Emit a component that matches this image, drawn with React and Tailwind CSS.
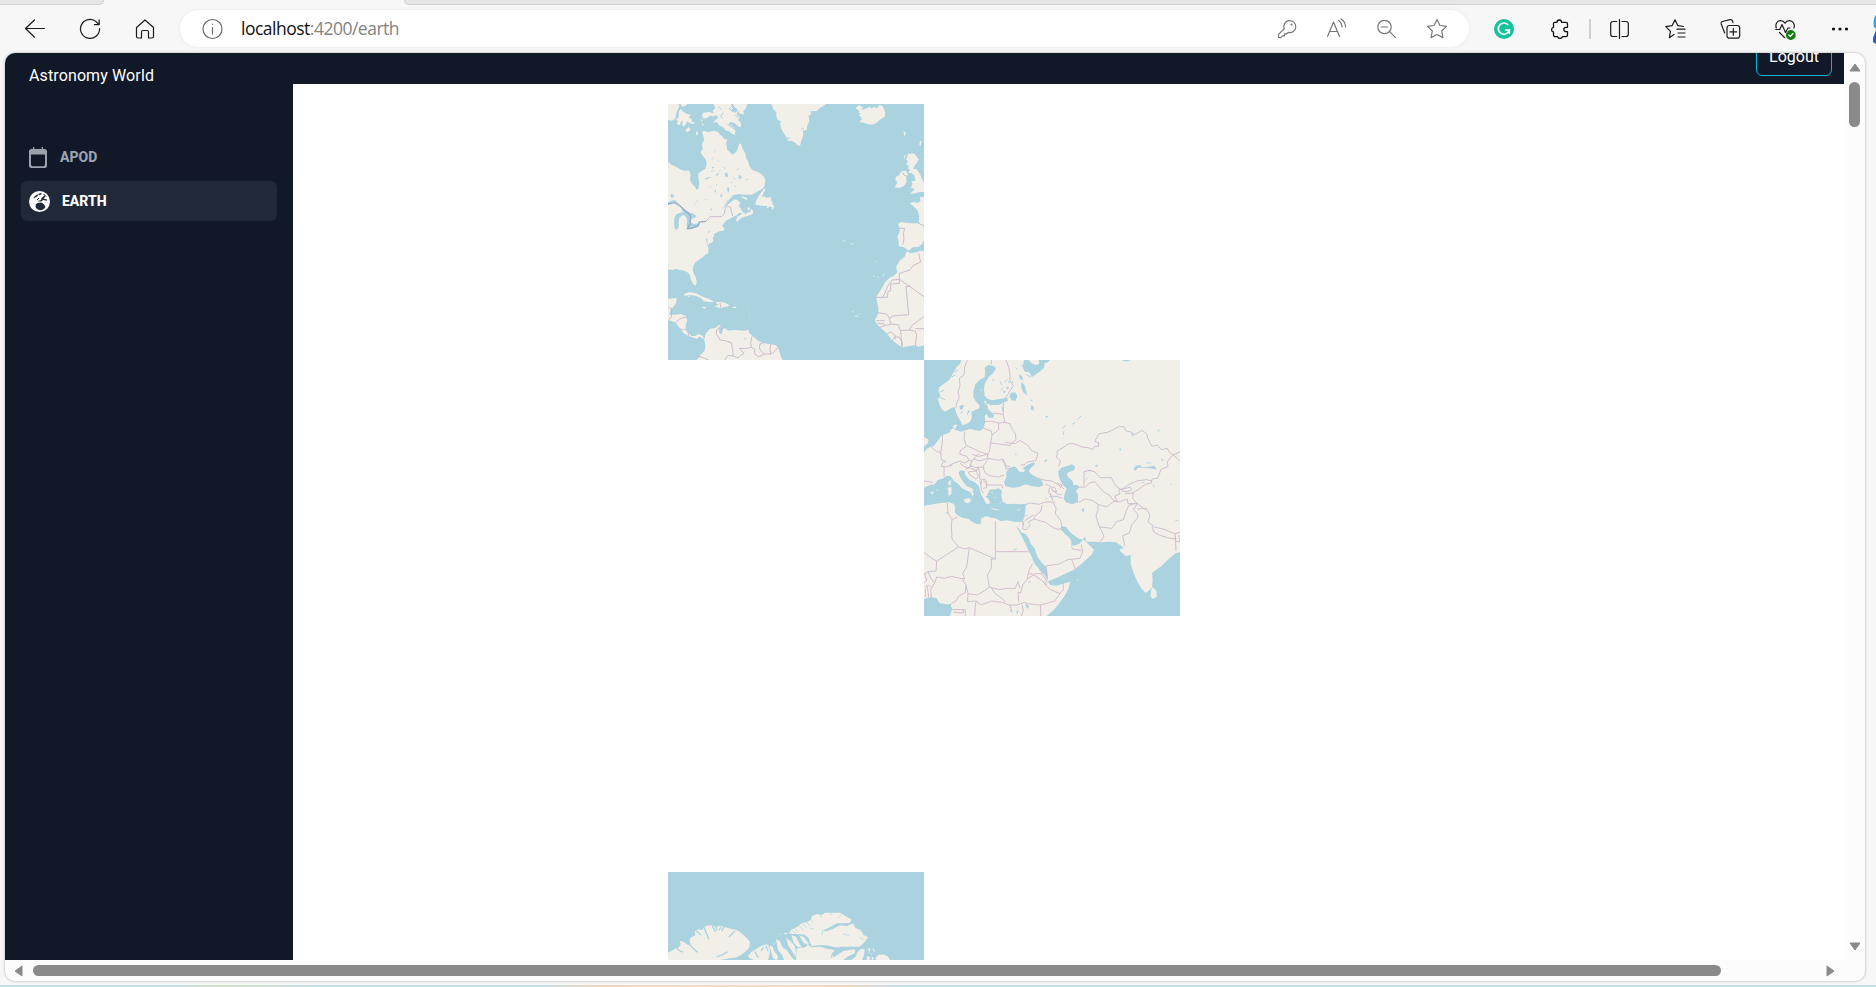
import React from 'react';

const WATER = '#aad3df';
const LAND = '#f2efe9';
const BORDER = '#c9b3c6';

function Icon({ children, className = 'size-6', stroke = '#1b1b1b', width = 1.2 }) {
  return (
    <svg viewBox="0 0 24 24" className={`shrink-0 ${className}`} fill="none" stroke={stroke} strokeWidth={width} strokeLinecap="round" strokeLinejoin="round">
      {children}
    </svg>
  );
}

function AtlanticTile() {
  return (
    <svg viewBox="12 12 768 768" className="block size-64" preserveAspectRatio="none">
      <rect x="12" y="12" width="768" height="768" fill={WATER} />
      <g fill={LAND}>
        <path d="M12 12H44L46 20 40 30 36 44 34 56 24 62 12 60Z" />
        <path d="M44 36 50 26 58 36 70 42 82 44 74 52 84 58 82 64 92 68 90 72 78 70 70 64 66 72 60 80 54 74 56 62 50 66 48 76 38 72 42 62 36 60 44 52Z" />
        <path d="M50 12H70L62 20 52 18ZM64 90 74 82 80 86 76 94 68 96ZM96 94 102 96 102 104 97 106ZM108 58 116 60 114 66ZM112 70 120 73 116 78Z" />
        <path d="M148 12H200L206 22 202 34 214 38 222 30 218 44 228 52 222 60 232 70 230 82 224 80 212 70 200 66 194 72 208 82 216 92 212 100 216 104 204 102 196 94 186 92 178 82 166 76 158 66 146 68 154 60 164 52 156 46 146 50 140 46 130 54 118 56 114 46 118 38 134 36 150 40 146 32 154 24Z" />
        <path d="M208 12H250L246 24 238 34 240 44 226 40 220 28 212 22Z" />
        <path d="M322 12H486L474 20 464 26 460 32 448 34 438 34 442 42 434 48 436 64 430 76 428 90 416 92 418 104 412 122 408 138 400 136 394 128 382 122 374 124 364 108 356 94 350 82 348 64 340 58 336 44 338 38 328 28Z" />
        <path d="M574 24 586 16 596 22 592 30 600 28 610 24 618 20 622 26 632 20 638 26 646 14 656 18 660 28 664 36 662 50 650 58 638 68 624 74 610 72 600 68 586 66 594 58 590 50 584 46 590 40 580 36 588 34Z" />
        <path d="M114 96 120 92 130 96 144 94 152 92 162 96 168 104 178 112 180 118 190 118 186 130 190 150 198 156 204 164 214 158 220 150 224 134 230 130 236 146 244 160 246 174 252 184 256 198 262 206 270 212 282 216 292 222 300 232 304 240 302 256 296 266 284 272 274 278 264 284 240 284 224 282 210 284 196 298 184 314 174 328 184 320 198 308 212 298 220 300 230 308 224 316 230 326 234 334 244 342 250 338 258 336 262 326 268 334 266 342 250 348 236 352 224 360 220 366 216 360 220 350 228 346 236 340 226 338 218 346 208 350 198 356 186 362 180 370 174 378 182 386 178 392 166 394 154 400 150 402 150 408 146 414 148 424 140 430 136 430 134 436 128 428 130 420 128 414 126 420 130 434 134 446 132 460 124 464 116 472 104 480 94 488 88 498 86 510 90 522 96 534 98 548 94 558 86 550 80 538 78 526 72 518 64 514 52 510 44 510 36 506 26 510 12 508V312L20 308 32 306 46 314 56 324 52 330 60 334 50 338 38 342 32 352 30 370 32 386 38 390 44 382 44 366 46 354 54 346 60 346 66 350 70 360 68 372 70 388 82 386 100 378 104 370 88 372 80 366 82 356 92 354 98 348 86 340 76 338 66 332 56 324 46 312 32 300 12 306V186L22 194 36 200 48 208 60 212 76 212 80 224 78 240 84 252 94 262 98 270 104 264 106 252 104 238 102 222 114 212 124 206 128 192 126 180 114 164 110 156 116 148 114 132 120 120 118 108Z" />
        <path d="M302 264 296 272 288 282 282 292 276 302 274 314 284 316 300 318 310 318 308 326 316 320 324 320 322 328 328 328 330 318 324 310 328 306 322 304 320 292 306 294 302 288 294 292 298 280 304 270ZM230 288 250 294 248 300 236 294ZM250 326 254 320 258 326 254 332Z" />
        <path d="M732 162 744 160 752 162 764 178 758 190 752 196 748 206 758 208 768 222 774 238 780 248V276L768 276 752 280 736 282 748 272 752 266 740 264 746 252 742 244 754 242 752 228 744 220 734 218 738 208 732 208 734 196 726 194 732 184 726 180Z" />
        <path d="M712 214 724 212 730 218 732 224 726 232 728 246 720 258 706 264 692 262 696 256 700 246 694 240 696 230 706 226ZM720 168 726 164 722 178ZM718 94 726 98 722 110ZM768 122 772 124 770 138 766 134Z" />
        <path d="M780 290V378L768 372 764 362 766 348 760 330 750 320 738 310 748 306 762 308 770 302 768 292Z" />
        <path d="M702 372 712 366 740 370 764 370 780 378V420L774 432 764 440 746 442 734 452 720 442 704 438 704 424 700 410 706 396 708 386Z" />
        <path d="M728 454 740 460 760 456 768 452 780 454V736L764 740 754 736 736 738 716 742 702 734 684 720 672 706 662 694 650 684 638 672 632 660 640 648 644 630 640 608 636 592 646 576 656 560 664 546 676 534 692 526 700 516 696 502 706 484 722 470Z" />
        <path d="M60 582 76 576 96 580 112 588 126 594 142 600 150 606 136 606 120 604 110 594 96 588 76 584 62 588ZM154 606 170 606 184 608 196 616 190 620 178 622 166 624 150 618 164 616ZM112 620 128 622 122 626ZM206 620 218 620 216 624 206 624ZM70 586 78 588 74 592Z" />
        <path d="M12 596 38 594 36 610 28 620 20 630 16 644 30 644 50 642 66 648 70 660 66 672 64 690 74 700 82 708 94 708 104 702 118 708 120 716 106 710 98 716 86 712 72 708 58 698 50 688 42 678 34 668 20 662 12 660Z" />
        <path d="M120 714 126 700 138 686 154 684 166 674 172 678 164 686 166 698 174 702 176 688 182 684 192 692 214 690 240 692 256 690 254 696 262 704 270 712 284 724 298 730 318 732 336 736 344 748 350 768 356 780H98L110 764 122 752 124 736Z" />
        <path d="M534 420 546 424 540 424ZM558 430 568 431 562 433ZM632 484 638 486ZM628 526 634 530 626 529ZM640 530 646 532 642 534ZM656 526 662 520 658 530ZM564 632 570 636 564 636ZM576 646 584 650 572 650ZM582 640 588 642Z" stroke={LAND} strokeWidth="1.4" opacity="0.6" />
      </g>
      <g fill={WATER}>
        <path d="M20 282 30 284 28 294 20 292ZM144 200 152 202 144 206ZM156 224 164 216 160 230ZM182 220 190 218 192 230 184 230ZM120 238 130 232 144 232 128 238ZM224 224 236 232 224 238ZM168 290 172 280 176 290ZM190 262 196 264 194 278 190 272ZM244 238 256 236 248 240ZM150 276 156 266 154 278ZM96 302 104 302 98 306ZM138 328 144 324 142 332ZM194 126 200 124 200 132ZM158 250 160 258 156 254ZM168 692 174 692 172 702 166 700ZM242 712 246 716 242 720ZM24 636 28 640 22 642Z" />
      </g>
      <g fill="none" stroke={WATER} strokeWidth="2">
        <path d="M144 178 148 172M140 214 152 212M160 180 166 184M178 202 186 206M136 262 142 258M208 234 214 238M184 308 192 300M110 180 104 190M126 414 130 430M200 248 206 246M170 208 166 214M150 158 154 152M218 210 224 206M94 316 90 310M122 300 128 298M210 258 216 260" />
        <path d="M204 18 196 26 206 34M178 38 170 50 176 56M190 72 206 84 218 94M214 44 222 54M340 62 352 66M420 84 412 90M368 112 378 116M132 398 138 394M164 20 172 28" strokeWidth="3" />
      </g>
      <g fill="none" stroke={LAND} strokeWidth="1.2" opacity="0.75">
        <path d="M116 544 122 550M112 560 120 566M136 562 140 572M146 576 152 582M160 590 168 594M246 624 254 632 258 646 260 660 254 674M268 666 270 670M240 688 250 688M514 410 516 414" strokeDasharray="4 3" />
      </g>
      <g fill="none" stroke={BORDER} strokeWidth="2.6">
        <path d="M12 312 32 308 48 318 64 332 76 342 80 352 78 372 70 386 80 386 102 378 106 366 126 364" stroke="#94abc6" strokeWidth="4" />
        <path d="M126 364 138 350 172 350 180 342 184 326 190 318 200 322 202 334 206 348M12 624 22 624 22 652 14 658M34 668 46 658 60 652 70 652M48 686 58 690 62 686M72 698 74 708M118 706 122 714M168 608 170 622" />
        <path d="M172 676 158 690 156 702 164 712 168 720 184 722 202 728 206 752 208 768 192 766 182 780M206 768 222 774 230 766 240 760 226 744 244 746 262 742 260 728 264 710M262 742 272 748 272 762 284 770 294 766 302 762 292 754 286 744 288 732 298 728M302 762 320 762 318 748 320 732M320 762 330 756 340 744M98 768 114 772 134 780" />
        <path d="M716 216 720 226 728 228M706 384 722 386 718 400 720 416 716 434M764 370 780 378M764 460 770 486 748 496 738 510 706 520 706 538 684 540 670 560 664 576 656 592M636 592H670L672 574 680 572 680 552 706 550 706 538 738 560 780 590M738 558 726 560 734 644 684 648 678 656 668 642 640 638M676 656 680 672 702 674 710 692 736 690 744 676 780 650M636 662H662M640 670 662 672M644 684 664 676 680 674M668 702 680 696 692 704 694 718M684 722 694 710 706 712 714 726 714 740M710 692 712 718 714 740M736 690 754 694 758 704 754 738M754 686H780" />
      </g>
    </svg>
  );
}

function EurasiaTile() {
  return (
    <svg viewBox="12 15 768 768" className="block size-64" preserveAspectRatio="none">
      <rect x="12" y="15" width="768" height="768" fill={LAND} />
      <g fill={WATER}>
        <path d="M12 15H124L120 26 110 36 98 56 88 74 72 86 56 98 56 112 62 122 54 132 58 148 66 164 76 170 92 160 104 156 108 172 112 182 122 198 126 210 138 208 150 200 156 186 154 170 164 166 178 160 178 150 168 140 160 126 160 110 166 88 180 74 194 66 196 50 194 38 204 30 220 32 228 40 220 54 206 66 194 86 192 104 194 122 204 132 216 136 238 132 262 128 264 138 252 142 236 150 218 150 206 150 202 160 212 170 222 176 220 188 206 188 200 176 194 184 196 202 190 220 180 228 168 226 150 222 136 226 124 230 108 226 98 220 92 226 86 220 82 206 82 192 90 180 104 182 100 196 92 206 86 216 92 230 80 236 66 240 60 248 50 262 42 272 30 276 20 282 12 294V274L24 264 26 254 12 246Z" />
        <path d="M312 15H326L336 26 348 30 358 26 356 15H390L384 22 374 24 372 38 362 48 348 58 336 66 328 52 314 50 308 36ZM604 15H632L620 20ZM272 114 286 112 292 124 286 138 276 136 268 126ZM304 80 314 90 318 108 322 122 310 112 304 98ZM296 58 306 64 310 76 300 72ZM334 150 342 156 340 168 332 162ZM118 152 132 150 128 162 120 164ZM144 166 150 168 140 182ZM258 94 264 96 262 106ZM250 106 258 110 250 116Z" />
        <path d="M12 398 30 390 44 388 52 376 70 370 80 362 92 364 102 378 114 386 126 400 138 406 152 412 158 424 152 434 146 430 134 432 140 444 150 442 156 428 162 416 154 406 162 410 156 400 140 394 130 382 120 366 116 352 122 346 134 348 136 360 148 374 164 382 176 392 180 406 184 420 190 430 198 446 210 446 208 434 196 424 212 420 208 404 222 404 236 400 246 408 244 422 248 440 262 448 282 446 298 448 318 446 316 464 314 480 310 496 302 502 282 500 262 496 242 498 226 490 214 488 198 484 184 490 182 508 168 506 156 500 146 492 126 488 112 480 104 472 106 456 100 446 88 442 62 444 38 448 12 452Z" />
        <path d="M252 380 260 366 258 352 270 338 284 334 292 342 298 350 310 352 316 346 308 340 322 330 340 322 346 326 334 338 326 348 334 358 350 366 366 378 370 390 358 396 336 394 316 388 298 396 278 398 256 394Z" />
        <path d="M414 350 424 338 440 334 456 328 466 336 462 346 446 352 440 358 446 368 458 378 460 390 474 390 476 400 468 408 474 420 474 442 456 448 438 442 430 430 436 412 440 400 428 390 420 374 416 362Z" />
        <path d="M288 514 296 520 306 534 316 536 326 550 332 566 344 580 348 594 354 608 366 624 378 636 382 650 382 676 390 690 410 692 450 680 446 700 434 722 420 742 402 764 380 783H780V592L768 594 756 604 740 618 724 634 706 646 696 654 698 676 696 696 688 706 676 714 664 700 652 680 642 656 632 628 632 600 618 604 602 590 598 584 612 578 588 562 570 560 540 562 520 560 500 560 494 544 488 556 478 566 462 572 454 570 454 558 446 546 436 538 424 526 424 514 438 516 450 532 464 542 478 552 494 556 510 572 522 584 516 598 494 618 480 630 462 644 440 654 416 666 392 676 384 678 374 660 362 650 354 638 342 624 336 606 328 592 318 570 308 550 300 534Z" />
        <path d="M12 732 32 726 50 730 58 744 76 748 92 748 96 762 90 783H12Z" />
        <path d="M640 342 648 332 664 330 662 336 682 336 704 332 710 344 690 340 670 338 654 338 646 348ZM722 308 732 318 726 318ZM634 232 640 238 636 246ZM714 226 720 222 714 232ZM598 280 604 282 600 288ZM506 344 514 346 506 350ZM524 332 534 328 530 336ZM484 462 494 460 490 474 486 466ZM372 318 382 312 378 322ZM376 182 384 184 380 190ZM664 380 676 382 668 384ZM752 386 758 388 752 390ZM284 296 294 300 286 300ZM316 744 326 752 324 762 318 756ZM290 766 296 768 290 780ZM326 678 334 680 326 684Z" />
        <path d="M210 404 234 402 242 412 238 430 246 446 236 456 220 450 208 436 202 418Z" />
        <path d="M428 220 438 210M430 240 432 228M456 208 466 202M472 194 484 182M700 388 702 396M270 764 276 772M680 324 694 324M496 374 504 368M766 496 774 496M280 586 292 580M78 472 84 476M388 424 398 428M376 428 382 430" fill="none" stroke={WATER} strokeWidth="2.500" />
        <path d="M242 106 250 98M214 58 220 46M254 82 262 74M268 84 266 78M128 168 122 176M318 58 332 66M330 134 338 138M304 28 310 36M286 38 292 42M218 78 222 72M240 80 246 90M246 156 248 168M262 102 266 96M276 84 278 78M332 50 336 58M58 112 72 106M60 128 76 134M94 66 106 60M104 52 114 44" fill="none" stroke={WATER} strokeWidth="3" />
      </g>
      <g fill={LAND}>
        <path d="M86 380 92 376 92 390 86 390ZM84 398 94 396 94 416 86 422ZM132 434 148 430 144 444 134 440ZM32 410 42 412 36 418ZM48 404 54 406ZM212 460 238 464 224 464ZM290 464 300 460 298 468ZM238 446 244 442ZM98 214 110 208 106 222ZM132 190 138 196 130 198ZM696 696 708 706 710 724 700 732 692 724 694 706ZM470 674 476 676ZM180 104 186 106ZM200 146 210 148 204 156ZM212 412 220 414ZM222 426 228 430ZM192 138 200 140 196 146Z" stroke={LAND} strokeWidth="1" />
      </g>
      <g fill="none" stroke={BORDER} strokeWidth="2.400">
        <path d="M142 15 134 36 132 60 118 70 120 92 114 110 118 128 110 144 108 158M214 15V28M258 15 266 36 270 60 270 78 280 92 270 108 256 130M250 142V178L254 202 270 206 274 218 286 236 288 254 278 262 270 272 246 268 212 264M222 174 250 178M194 200 212 198 236 204 254 202M236 204 236 224 216 240 212 264 208 290 202 300M190 220 214 228 216 240" />
        <path d="M134 230 132 250 138 272 154 278 178 290 204 298M68 240 66 270 62 292 64 314 78 320 68 322 64 334 80 336 90 330 108 322 120 318 132 324 148 316 140 304 120 298 120 288 138 274M148 316 156 318 168 304 178 296M156 298 176 304 204 298 202 310 180 318 160 312M156 318 150 332 168 338 188 336 200 318 206 310M156 332 144 338 130 334 120 324M32 274 50 290 62 292M12 378 38 382M72 334 72 364M98 330 90 334" />
        <path d="M254 262 286 266 300 256 322 270 336 288 354 294 348 316 320 322 312 330 302 330M204 310 236 316 248 312 260 334 270 334M246 314 254 326 258 342 270 340M194 340 188 336M188 336 196 354 208 362 236 366 252 360M174 338 180 356 178 370 186 376 180 388M146 350 168 348 176 364 168 372 150 360 144 350M168 348 176 338M184 372 196 374 202 390 224 390 246 390 248 400M182 384 184 404 190 414M190 378 198 382 200 398 190 400M178 376 186 386M136 344 148 338 172 348" />
        <path d="M354 370 376 376 396 378 412 388 426 396 432 402M376 388 392 394 398 408 410 410 404 398 396 396M388 398 386 414 398 424 412 424 426 430M400 406 412 418 426 418M390 414 398 436 406 444M412 384 426 390 420 400M318 448 332 444 356 448 374 442 392 440 402 446 408 460 406 476 422 496 426 516 418 524 400 518 376 502 342 492 346 482 362 470 366 450M342 480 324 490 314 498M342 492 324 502 332 510 318 524 308 522 310 498M420 520 426 526M292 464 300 462M314 484 322 478M306 500 312 512" />
        <path d="M416 334 422 318 410 308 412 288 432 276 446 266 462 266 486 276 504 278 518 284 524 274 536 274 536 262 524 260 530 248 538 236 562 232 576 226 598 214 612 216 618 228 636 232 642 240 666 226 680 236 684 252 696 274 712 270 724 284 742 280 748 292 760 300 780 290M760 300 780 318M760 298 742 320 744 334 722 344 718 358 712 370 696 372 694 384 676 388 658 402 640 412 638 430 652 446" />
        <path d="M492 392V350L508 346 524 350 540 368 574 368 582 384 590 396 604 404 624 390 650 378 680 374 696 378M474 396 496 396 508 384 524 380 536 394 550 410 570 422 580 436 592 440 584 424 600 416 596 404M476 442 496 432 516 436 534 448 560 456 580 440 598 440 622 432 624 446 652 446 678 466M598 404 618 400 630 396 636 404 622 410 604 408M614 416 640 414M534 448 534 464 528 484 538 516 576 520 590 500 610 494 618 470 626 452 646 444M538 516 546 530 552 546 540 560M652 446 640 464 654 478 652 490 636 508 628 534 608 542 612 562 614 572M652 462 678 460 690 480 684 500 704 516 736 524 764 536 768 552 742 548 718 540 702 532 696 514M764 536 780 532M766 544 768 588M768 560 780 560M776 540 780 560" />
        <path d="M82 444 84 474 96 494 112 486M96 494 94 510 96 552 116 576 134 582 148 578 226 612M12 592 36 610 50 618 116 576M226 498V612L214 612M226 590H326M148 578 144 606 140 636 128 656 134 672 120 670 94 664 72 670 50 666 44 684 32 704 34 726M214 612V640L202 660 208 696 198 704 172 720 144 716 138 690 128 674M50 618 48 648 24 650 12 658M14 656 20 676 12 684M24 650 34 672 44 684M14 696 24 690 32 696M16 700V726M22 694 26 726M138 690 136 712 116 724 108 738 94 746 88 752M94 764H136V783M144 716 142 740 168 738 184 750 214 738 246 742 266 750 290 750 314 742 322 746 360 750 384 744 404 738 420 716 392 704 376 690 368 678 336 656 324 658 322 672 308 690 302 714 294 712 296 740M208 696 236 704 262 700 286 700 294 680 300 700M214 698 224 714 240 726 256 740M164 783 166 752 168 740M306 750 310 766 304 783M362 750 362 783M130 764V774L100 772M270 750 276 770M324 656 330 640 338 626M322 672 346 656 366 656 382 682M374 680 380 690M430 684 430 706 418 716M378 632 416 628 444 614 480 610 488 590 484 568M456 616 466 642M378 634 382 674M454 574 458 582 484 586" />
      </g>
    </svg>
  );
}

function ArcticTile() {
  return (
    <svg viewBox="24 36 768 264" className="block h-[88px] w-64" preserveAspectRatio="none">
      <rect x="24" y="36" width="768" height="264" fill={WATER} />
      <g fill={LAND}>
        <path d="M24 278 34 272 44 268 56 262 62 256 60 242 72 246 84 256 92 252 88 240 94 232 106 226 104 216 114 208 126 210 138 198 156 196 164 200 180 198 196 202 212 206 230 210 240 216 250 224 262 236 270 246 268 262 258 274 244 284 230 292 200 296 180 300H24Z" />
        <path d="M264 288 274 276 290 266 304 258 320 252 326 258 330 270 328 286 324 300H282L268 294ZM328 256 338 260 344 276 354 288 352 300 340 296 334 276ZM340 250 346 252 340 254ZM348 238 360 244 368 262 382 272 394 290 404 300H372L366 284 354 270ZM378 234 392 244 404 258 408 276 406 292 396 272 384 256ZM394 226 408 230 416 246 424 260 414 262 402 250ZM372 218 384 220 376 224Z" />
        <path d="M410 266 424 262 434 262 446 256 456 262 482 260 500 266 524 270 516 284 522 292 532 284 552 272 574 268 588 270 584 280 562 290 550 300H408ZM592 276 604 266 614 268 612 286 606 300H572L588 288Z" />
        <path d="M386 220 396 208 412 200 424 190 440 186 452 180 456 168 470 162 486 164 496 158 520 158 540 158 556 168 574 178 570 188 552 190 530 190 512 200 488 212 500 214 520 206 540 196 562 198 580 190 586 204 602 210 610 224 624 232 616 244 606 254 596 262 570 260 546 262 524 262 500 256 476 256 456 258 450 248 446 234 434 224 416 222 400 222ZM418 226 432 232 446 250 444 258 432 250 424 238Z" />
        <path d="M648 292 656 284 672 284 684 290 690 300H648ZM624 264 630 266 628 276ZM638 264 644 270 642 276ZM622 288 630 292 628 300H620ZM636 290 642 296 636 300ZM356 222 362 224ZM628 278 636 284Z" stroke={LAND} strokeWidth="1" />
      </g>
      <g fill="none" stroke={WATER} strokeWidth="4" strokeLinecap="round">
        <path d="M134 206 140 222 146 236M158 200 166 214M168 196 170 208M182 202 178 210M192 200 186 212M224 214 208 230M84 248 96 262 112 276M50 264 58 272 68 276M110 214 122 224M172 290 188 284 202 276M286 276 294 292M310 264 304 272M318 258 324 272M514 292 518 280 540 270 572 268M372 262 380 244M540 262 566 262 596 262M430 262 440 252M588 268 586 288 572 298" />
        <path d="M424 188 440 202M416 196 430 210M436 184 448 196M450 176 460 188M452 206 460 206M404 206 416 216M398 212 408 220M488 212 486 224M480 162 484 172M510 158 514 164M544 164 536 172M478 258 500 260M550 222 566 226M612 238 600 234" strokeWidth="2" />
      </g>
    </svg>
  );
}

function TabStrip() {
  return (
    <div className="flex h-[5px] bg-[#f7f7f7]">
      <div className="w-[104px] rounded-br-[5px] border-b border-r border-[#cfcfcf] bg-[#e6e6e6]" />
      <div className="w-[300px]" />
      <div className="flex-1 rounded-bl-[5px] border-b border-l border-[#cfcfcf] bg-[#e6e6e6]" />
    </div>
  );
}

function Toolbar() {
  return (
    <div className="flex h-12 items-start pl-[23px] pt-[5px]">
      <div className="flex h-[37px] w-[157px] items-center gap-[31px]">
        <Icon><path d="M21.500 11.500H2.500M11.500 3 2.500 11.500l9 8.700" /></Icon>
        <Icon><path d="M21.500 11.500a9.500 9.500 0 1 1-3.200-6.700L21 7.500M21.200 2.800v4.800h-4.800" /></Icon>
        <Icon><path d="M3.500 10.500 12 3l8.500 7.500v9a1.500 1.500 0 0 1-1.500 1.500h-3.500v-6a1.500 1.500 0 0 0-1.500-1.500h-4a1.500 1.500 0 0 0-1.500 1.500v6H5a1.500 1.500 0 0 1-1.500-1.500z" /></Icon>
      </div>
      <div className="flex h-[37px] w-[1289px] items-center rounded-full bg-white pl-5 pr-[20px] shadow-[0_0_4px_rgba(0,0,0,0.07)]">
        <Icon stroke="#6b6b6b"><circle cx="12.500" cy="12" r="9.500" /><path d="M12.500 10.500v6.500M12.500 7v.3" /></Icon>
        <div className="-mt-0.5 ml-[17px] flex-1 whitespace-nowrap font-['Open_Sans',sans-serif] text-[17.500px] font-normal leading-6 tracking-[-0.5px] text-[#838383]">
          <span className="text-[#111]">localhost</span>:4200/earth
        </div>
        <div className="flex items-center gap-[26px]">
          <Icon stroke="#767676"><path d="M9.200 11.800a6 6 0 1 1 4 3.600l-1.700 1.400h-2v2h-2l-1.800 1.800H3.500v-3.200z" /><circle cx="16.500" cy="7.500" r=".5" /></Icon>
          <Icon stroke="#767676"><path d="m2.500 19.500 6-14.500 6 14.500M4.800 14.500h7.500M13.500 3.500c2.300 1.500 3.400 3.500 3.500 6.500M16 2c3 1.800 4.500 4.800 4.600 8" /></Icon>
          <Icon stroke="#767676"><circle cx="9.500" cy="10" r="6.700" /><path d="M14.700 14.700 20.300 20.300M6.300 10h6.400" /></Icon>
          <Icon stroke="#767676"><path d="m12 2.500 2.900 6 6.600.9-4.800 4.600 1.200 6.600-5.900-3.100-5.900 3.100L7.300 14 2.500 9.400l6.600-.9z" /></Icon>
        </div>
      </div>
      <div className="flex h-[37px] w-[407px] shrink-0 items-center pl-6">
        <svg viewBox="0 0 22 22" className="size-[22px] shrink-0"><circle cx="11" cy="11" r="10" fill="#15c39a" /><path d="M15.200 7A5.600 5.600 0 1 0 16 13M12 12h4.300v3.800" fill="none" stroke="#fff" strokeWidth="1.700" /></svg>
        <Icon className="ml-[32px] size-6" stroke="#111" width={1.3}><path d="M7.500 5.300H10a2.300 2.300 0 0 1 4.600 0h4.200a1.700 1.700 0 0 1 1.700 1.700v3.300h-1.500a2.200 2.200 0 0 0 0 4.400h1.500V18a1.700 1.700 0 0 1-1.700 1.700h-3.500a2.400 2.400 0 0 1-4.600 0H8.200A1.700 1.700 0 0 1 6.500 18v-3a2.400 2.400 0 0 1 0-4.700V6.500a1.200 1.200 0 0 1 1-1.200z" /></Icon>
        <div className="ml-[18px] h-5 w-0.5 bg-[#d0d0d0]" />
        <Icon className="ml-[17px] size-6"><path d="M8.800 4.500H5A2.300 2.300 0 0 0 2.700 6.800v10.400A2.300 2.300 0 0 0 5 19.500h3.800M14 4.500h4a2.300 2.300 0 0 1 2.300 2.300v10.400a2.300 2.300 0 0 1-2.300 2.300h-4M11.500 2.700v18.800" /></Icon>
        <Icon className="ml-[32px] size-6"><path d="M10 17.500 5.300 20.700 6.500 14.300 1.800 9.600 8 8.700 11 2.800l2.900 5.900 5.600.8M13 12.200h8M14 16h7M14 20h7" /></Icon>
        <Icon className="ml-[31px] size-6"><rect x="8" y="8.500" width="12.700" height="12.700" rx="2.500" /><path d="M14.300 11.500v6.700M11 14.900h6.700M5.700 16 2.200 7A2 2 0 0 1 3.300 4.500L11 2.700a2 2 0 0 1 2.500 1.300l.5 1.700" /></Icon>
        <Icon className="ml-[31px] size-6"><path d="M2.300 11C1 7.500 3 3.700 6.500 3.700c2 0 3.500 1 4.500 2.500 1-1.500 2.500-2.500 4.500-2.500 3.500 0 5.700 3.800 4.500 7.300M1.800 12.500h4l2.200-5 3.500 8 2.500-4.500h2M5.500 15.500l5 5" /><circle cx="16.800" cy="18" r="4.300" fill="#107c10" stroke="#107c10" /><path d="m14.800 18 1.500 1.500 2.700-3" stroke="#fff" /></Icon>
        <Icon className="ml-[31px] size-6"><g fill="#111" stroke="#111"><circle cx="4.500" cy="12" r="1" /><circle cx="11" cy="12" r="1" /><circle cx="17.500" cy="12" r="1" /></g></Icon>
        <svg viewBox="0 0 3 30" className="ml-auto h-[30px] w-[3px]"><path d="M3 1C1 3 0 8 1 13l2 2z" fill="#22a6f2" /><path d="M3 16 0 24v4l3 2z" fill="#1b5fd0" /></svg>
      </div>
    </div>
  );
}

function Sidebar() {
  return (
    <nav className="flex w-72 shrink-0 flex-col bg-[#111827] px-4 pt-[53px]">
      <a className="flex h-10 items-center gap-3 pl-2 text-[#9ca3af]">
        <svg viewBox="0 0 18 21" className="mt-px h-[21px] w-[18px]" fill="currentColor"><path fillRule="evenodd" d="M4 0h1.300v2h7.400V0H14v2h1.500A2.500 2.500 0 0 1 18 4.500v14a2.500 2.500 0 0 1-2.500 2.500h-13A2.500 2.500 0 0 1 0 18.500v-14A2.500 2.500 0 0 1 2.500 2H4zM2 7.500v10A1.700 1.700 0 0 0 3.700 19.200h10.600a1.700 1.700 0 0 0 1.700-1.700v-10z" /></svg>
        <span className="pl-px text-sm font-extrabold leading-5">APOD</span>
      </a>
      <a className="mt-1 flex h-10 items-center gap-3 rounded-md bg-[#1f2937] pl-2 text-white">
        <svg viewBox="0 0 21 21" className="size-[21px]"><circle cx="10.500" cy="10.500" r="10.500" fill="#fff" /><g fill="#1f2937"><path d="M6.500 15c0-2 1.500-3.300 3.500-3.300l2.500-.2 2.500 1.700 1.500 2.800c-1 2-3 3.200-5.200 3.200-2.500-.2-4.800-1.700-4.800-4.200z" /><path d="M5 6 8 3.500l1.500.5L7.500 6 6 6.500 4.500 8zM9 3l3-1 1 1-2.500 1.200zM12.500 7l3-2.500 1 1-2 2 3.500 1v1.200l-4-.7-1.700 1.500-4.300-.2L12 9z" /></g><path d="M14.500 3 17 5.500M10 7l-2 2" stroke="#1f2937" /></svg>
        <span className="text-sm font-extrabold leading-5">EARTH</span>
      </a>
    </nav>
  );
}

function Page() {
  return (
    <div className="flex min-h-0 flex-1 flex-col overflow-hidden font-['Roboto',sans-serif]">
      <header className="flex h-[31px] shrink-0 items-end justify-between overflow-hidden bg-[#111827] pl-6 pr-3">
        <div className="h-[18px] text-base leading-[20px] tracking-[0.12px] text-white">Astronomy World</div>
        <button className="mb-2 flex h-[42px] w-[76px] shrink-0 items-center justify-center rounded-md border border-[#06b6d4] pt-[3px] text-base leading-6 text-white">Logout</button>
      </header>
      <div className="flex min-h-0 flex-1">
        <Sidebar />
        <main className="flex-1 overflow-hidden bg-white pl-[375px] pt-5">
          <div className="grid h-[856px] grid-cols-[256px_256px] grid-rows-[256px_256px_256px_88px]">
            <div className="col-start-1 row-start-1"><AtlanticTile /></div>
            <div className="col-start-2 row-start-2"><EurasiaTile /></div>
            <div className="col-start-1 row-start-4"><ArcticTile /></div>
          </div>
        </main>
      </div>
    </div>
  );
}

export default function App() {
  return (
    <div className="flex h-[987px] w-[1876px] flex-col overflow-hidden bg-[#f7f7f7]">
      <TabStrip />
      <Toolbar />
      <div className="ml-[5px] flex h-[928px] w-[1860px] flex-col overflow-hidden rounded-[10px] bg-[#fcfcfc] shadow-[0_0_3px_rgba(0,0,0,0.3)]">
        <div className="flex min-h-0 flex-1">
          <Page />
          <div className="flex w-[21px] flex-col items-center pt-[10px]">
            <svg viewBox="0 0 12 9" className="h-[9px] w-3"><path d="M6 1 11 8H1z" fill="#8a8a8a" stroke="#8a8a8a" strokeLinejoin="round" /></svg>
            <div className="mt-[10px] h-[45px] w-[11px] rounded-full bg-[#8a8a8a]" />
            <svg viewBox="0 0 12 9" className="mb-[9px] mt-auto h-[9px] w-3"><path d="M1 1h10L6 8z" fill="#8a8a8a" stroke="#8a8a8a" strokeLinejoin="round" /></svg>
          </div>
        </div>
        <div className="flex h-[21px] items-center pl-[9px]">
          <svg viewBox="0 0 9 12" className="h-3 w-[9px]"><path d="M8 1v10L1 6z" fill="#8a8a8a" stroke="#8a8a8a" strokeLinejoin="round" /></svg>
          <div className="ml-[10px] h-[11px] w-[1688px] rounded-full bg-[#8a8a8a]" />
          <svg viewBox="0 0 9 12" className="ml-[105px] h-3 w-[9px]"><path d="M1 1v10l7-5z" fill="#8a8a8a" stroke="#8a8a8a" strokeLinejoin="round" /></svg>
        </div>
      </div>
      <div className="mt-auto h-0.5 bg-[linear-gradient(to_right,#c3dfe8_0%,#c3dfe8_9%,#d3e2c4_12%,#c3dfe8_17%,#c3dfe8_29%,#f3d6b8_32%,#f5dcc6_40%,#f3d6b8_45%,#c3dfe8_48%,#c3dfe8_100%)]" />
    </div>
  );
}
